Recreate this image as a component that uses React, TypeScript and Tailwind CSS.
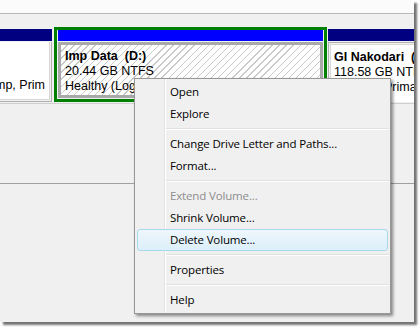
const menuFont = { fontFamily: '"Open Sans", "Noto Sans", sans-serif' };

type Entry = { label?: string; disabled?: boolean; active?: boolean; sep?: boolean };

const entries: Entry[] = [
  { label: "Open" },
  { label: "Explore" },
  { sep: true },
  { label: "Change Drive Letter and Paths..." },
  { label: "Format..." },
  { sep: true },
  { label: "Extend Volume...", disabled: true },
  { label: "Shrink Volume..." },
  { label: "Delete Volume...", active: true },
  { sep: true },
  { label: "Properties" },
  { sep: true },
  { label: "Help" },
];

function ContextMenu() {
  return (
    <div
      className="absolute left-[134px] top-[78px] w-[257px] border border-[#979797] bg-[#f0f0f0] py-[2px] shadow-[2px_2px_3px_rgba(0,0,0,0.45)]"
      style={menuFont}
    >
      {/* gutter */}
      <div className="absolute bottom-0 left-[29px] top-0 w-[2px] border-l border-[#e2e3e3] bg-white" />
      {entries.map((e, i) =>
        e.sep ? (
          <div key={i} className="flex h-[8px] items-center pl-[31px] pr-[1px]">
            <div className="h-[2px] w-full border-t border-[#e0e0e0] bg-white" />
          </div>
        ) : (
          <div key={i} className="relative h-[22px] px-[2px]">
            <div
              className={
                e.active
                  ? "flex h-full items-center rounded-[3px] border border-[#a8d8eb] bg-[linear-gradient(#eef7fc,#dceffa)] pl-[32px]"
                  : "flex h-full items-center border border-transparent pl-[32px]"
              }
            >
              <span
                className={
                  "relative text-[11.5px] leading-none tracking-[-0.15px] " +
                  (e.disabled ? "text-[#8d8d8d]" : "text-black")
                }
              >
                {e.label}
              </span>
            </div>
          </div>
        )
      )}
    </div>
  );
}

function Body({ lines }: { lines: string[] }) {
  return (
    <div className="flex flex-col whitespace-pre text-[12.5px] leading-[15px] text-black">
      <span className="font-bold">{lines[0]}</span>
      <span>{lines[1]}</span>
      <span>{lines[2]}</span>
    </div>
  );
}

export default function App() {
  return (
    <div className="h-[328px] w-[420px] bg-white">
      <div
        className="relative h-[322px] w-[414px] overflow-hidden bg-[#f0f0f0] shadow-[3px_3px_2px_rgba(0,0,0,0.55)]"
        style={{ fontFamily: '"Liberation Sans", Arial, sans-serif' }}
      >
        <div className="h-[13px] bg-[#fbfbfb]" />
        <div className="h-[1px] bg-[#b9b9b9]" />
        <div className="h-[13px]" />

        {/* disk row */}
        <div className="flex h-[75px] gap-[1px]">
          {/* system partition (scrolled) */}
          <div className="flex w-[52px] shrink-0 flex-col pt-[2px]">
            <div className="h-[12px] bg-[#000080]" />
            <div className="mt-[1px] flex-1 border-r border-b border-[#b0b0b0] bg-[#f0f0f0] pr-[1px] pb-[1px]">
              <div className="flex h-full justify-end overflow-hidden border-r border-b border-[#d8d8d8] bg-white pr-[4px] pt-[36px]">
                <span className="whitespace-nowrap text-[12.5px] leading-[15px]">Crash Dump, Prim</span>
              </div>
            </div>
          </div>

          {/* selected logical drive */}
          <div className="ml-[1px] flex w-[273px] shrink-0 flex-col border-[3px] border-[#008000] px-[1px] pb-[1px]">
            <div className="h-[11px] bg-[#0000ff]" />
            <div className="mt-[1px] flex-1 border-[3px] border-[#a9a9a9] bg-white bg-[repeating-linear-gradient(135deg,#ffffff_0px,#ffffff_4px,#c9c9c9_4px,#c9c9c9_5px)] pl-[4px] pt-[4px]">
              <Body lines={["Imp Data  (D:)", "20.44 GB NTFS", "Healthy (Logical Drive)"]} />
            </div>
          </div>

          {/* primary partition */}
          <div className="flex min-w-0 flex-1 flex-col pt-[2px]">
            <div className="h-[12px] bg-[#000080]" />
            <div className="mt-[1px] flex-1 border-l border-t border-[#b0b0b0] bg-[#f0f0f0] pl-[1px] pt-[1px]">
              <div className="h-full overflow-hidden border-l border-t border-[#d8d8d8] bg-white pl-[3px] pt-[5px]">
                <Body lines={["GI Nakodari  (F:)", "118.58 GB NTFS", "Healthy (Primary Partition)"]} />
              </div>
            </div>
          </div>
        </div>

        <div className="mt-[1px] h-[1px] bg-[#cfcfcf]" />
        <div className="h-[79px]" />
        <div className="h-[1px] bg-[#a0a0a0]" />

        <ContextMenu />
      </div>
    </div>
  );
}
